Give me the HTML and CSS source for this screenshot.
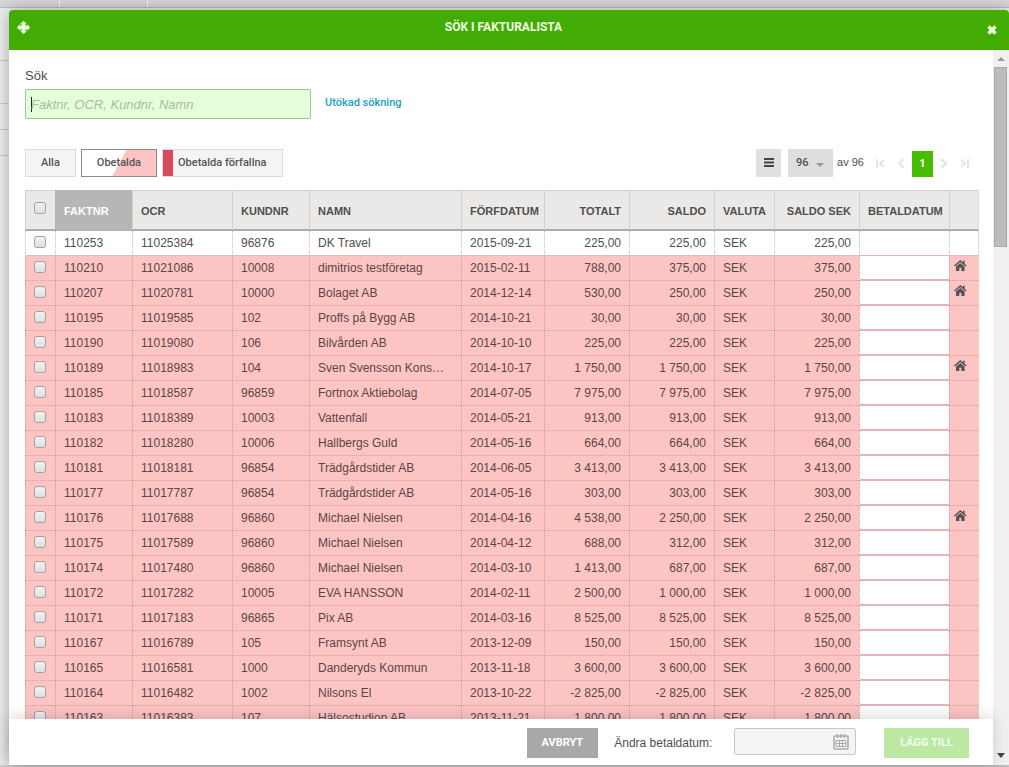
FILE: index.html
```html
<!DOCTYPE html>
<html lang="sv">
<head>
<meta charset="utf-8">
<meta name="viewport" content="width=device-width, initial-scale=1">
<title>Sök i fakturalista</title>
<link rel="stylesheet" href="styles.css">
</head>
<body>
<svg class="defs" aria-hidden="true">
  <symbol id="house" viewBox="0 0 13 11"><path d="M6.3 0 0 5.400l.9 1L6.300 2l5.400 4.400.9-1L10.600 3.700V.8H9v1.500z"/><path d="M6.300 2.900 2 6.400V11h3.300V7.700h2V11h3.300V6.400z"/></symbol>
</svg>
<div class="backdrop" aria-hidden="true">
  <div class="tabstrip"><span></span><span></span></div>
  <div class="ledge ledge-a"></div><div class="ledge ledge-b"></div><div class="ledge ledge-c"></div><div class="ledge ledge-c"></div>
</div>
<section class="dialog" role="dialog" aria-labelledby="title">
  <header class="titlebar">
    <button class="bar-btn" aria-label="Flytta"><svg width="13" height="13" viewBox="0 0 13 13"><path d="M6.500 0 9.300 3H8v2h2V3.700L13 6.500 10 9.300V8H8v2h1.300L6.500 13 3.700 10H5V8H3v1.300L0 6.500 3 3.700V5h2V3H3.700z" stroke="currentColor" stroke-width=".5"/></svg></button>
    <h1 id="title">SÖK I FAKTURALISTA</h1>
    <button class="bar-btn close" aria-label="Stäng"><svg width="10" height="10" viewBox="0 0 10 10"><path d="M1.500 1.500l7 7M8.500 1.500l-7 7" stroke="currentColor" stroke-width="3.400"/></svg></button>
  </header>
  <div class="dialog-body">
    <main class="content">
      <label class="search-label" for="q">Sök</label>
      <div class="search-row">
        <input class="search" id="q" type="text" placeholder="Faktnr, OCR, Kundnr, Namn">
        <a class="more" href="#">Utökad sökning</a>
      </div>
      <div class="toolbar">
        <div class="filters">
          <button class="filter">Alla</button>
          <button class="filter active">Obetalda</button>
          <button class="filter overdue">Obetalda förfallna</button>
        </div>
        <div class="pager">
          <button class="menu" aria-label="Meny"><svg width="10" height="9" viewBox="0 0 10 9"><path d="M0 0h10v2H0zM0 3.500h10v2H0zM0 7h10v2H0z"/></svg></button>
          <div class="per-page"><select aria-label="Rader per sida"><option>96</option></select><svg width="8" height="4" viewBox="0 0 8 4"><path d="M0 0h8L4 4z"/></svg></div>
          <span class="total">av 96</span>
          <nav class="pages" aria-label="Sidor">
            <button aria-label="Första"><svg width="9" height="9" viewBox="0 0 9 9"><path d="M1 0v9M8 1 4 4.500 8 8"/></svg></button>
            <button aria-label="Föregående"><svg width="9" height="9" viewBox="0 0 9 9"><path d="M7 0 2 4.500 7 9"/></svg></button>
            <button class="current">1</button>
            <button aria-label="Nästa"><svg width="9" height="9" viewBox="0 0 9 9"><path d="M2 0l5 4.500L2 9"/></svg></button>
            <button aria-label="Sista"><svg width="9" height="9" viewBox="0 0 9 9"><path d="M8 0v9M1 1l4 3.500L1 8"/></svg></button>
          </nav>
        </div>
      </div>
      <table class="invoices">
        <colgroup><col class="w30"><col class="w77"><col class="w100"><col class="w77"><col><col class="w83"><col class="w85"><col class="w85"><col class="w60"><col class="w85"><col class="w90"><col class="w30"></colgroup>
        <thead><tr><th><input type="checkbox" aria-label="Markera alla"></th><th class="sorted">FAKTNR</th><th>OCR</th><th>KUNDNR</th><th>NAMN</th><th>FÖRFDATUM</th><th>TOTALT</th><th>SALDO</th><th>VALUTA</th><th>SALDO SEK</th><th>BETALDATUM</th><th></th></tr></thead>
        <tbody>
          <tr class="plain"><td><input type="checkbox" aria-label="110253"><td>110253<td>11025384<td>96876<td>DK Travel<td>2015-09-21<td>225,00<td>225,00<td>SEK<td>225,00<td><td></tr>
          <tr><td><input type="checkbox" aria-label="110210"><td>110210<td>11021086<td>10008<td>dimitrios testföretag<td>2015-02-11<td>788,00<td>375,00<td>SEK<td>375,00<td><td><svg class="house"><use href="#house"/></svg></tr>
          <tr><td><input type="checkbox" aria-label="110207"><td>110207<td>11020781<td>10000<td>Bolaget AB<td>2014-12-14<td>530,00<td>250,00<td>SEK<td>250,00<td><td><svg class="house"><use href="#house"/></svg></tr>
          <tr><td><input type="checkbox" aria-label="110195"><td>110195<td>11019585<td>102<td>Proffs på Bygg AB<td>2014-10-21<td>30,00<td>30,00<td>SEK<td>30,00<td><td></tr>
          <tr><td><input type="checkbox" aria-label="110190"><td>110190<td>11019080<td>106<td>Bilvården AB<td>2014-10-10<td>225,00<td>225,00<td>SEK<td>225,00<td><td></tr>
          <tr><td><input type="checkbox" aria-label="110189"><td>110189<td>11018983<td>104<td>Sven Svensson Kons…<td>2014-10-17<td>1 750,00<td>1 750,00<td>SEK<td>1 750,00<td><td><svg class="house"><use href="#house"/></svg></tr>
          <tr><td><input type="checkbox" aria-label="110185"><td>110185<td>11018587<td>96859<td>Fortnox Aktiebolag<td>2014-07-05<td>7 975,00<td>7 975,00<td>SEK<td>7 975,00<td><td></tr>
          <tr><td><input type="checkbox" aria-label="110183"><td>110183<td>11018389<td>10003<td>Vattenfall<td>2014-05-21<td>913,00<td>913,00<td>SEK<td>913,00<td><td></tr>
          <tr><td><input type="checkbox" aria-label="110182"><td>110182<td>11018280<td>10006<td>Hallbergs Guld<td>2014-05-16<td>664,00<td>664,00<td>SEK<td>664,00<td><td></tr>
          <tr><td><input type="checkbox" aria-label="110181"><td>110181<td>11018181<td>96854<td>Trädgårdstider AB<td>2014-06-05<td>3 413,00<td>3 413,00<td>SEK<td>3 413,00<td><td></tr>
          <tr><td><input type="checkbox" aria-label="110177"><td>110177<td>11017787<td>96854<td>Trädgårdstider AB<td>2014-05-16<td>303,00<td>303,00<td>SEK<td>303,00<td><td></tr>
          <tr><td><input type="checkbox" aria-label="110176"><td>110176<td>11017688<td>96860<td>Michael Nielsen<td>2014-04-16<td>4 538,00<td>2 250,00<td>SEK<td>2 250,00<td><td><svg class="house"><use href="#house"/></svg></tr>
          <tr><td><input type="checkbox" aria-label="110175"><td>110175<td>11017589<td>96860<td>Michael Nielsen<td>2014-04-12<td>688,00<td>312,00<td>SEK<td>312,00<td><td></tr>
          <tr><td><input type="checkbox" aria-label="110174"><td>110174<td>11017480<td>96860<td>Michael Nielsen<td>2014-03-10<td>1 413,00<td>687,00<td>SEK<td>687,00<td><td></tr>
          <tr><td><input type="checkbox" aria-label="110172"><td>110172<td>11017282<td>10005<td>EVA HANSSON<td>2014-02-11<td>2 500,00<td>1 000,00<td>SEK<td>1 000,00<td><td></tr>
          <tr><td><input type="checkbox" aria-label="110171"><td>110171<td>11017183<td>96865<td>Pix AB<td>2014-03-16<td>8 525,00<td>8 525,00<td>SEK<td>8 525,00<td><td></tr>
          <tr><td><input type="checkbox" aria-label="110167"><td>110167<td>11016789<td>105<td>Framsynt AB<td>2013-12-09<td>150,00<td>150,00<td>SEK<td>150,00<td><td></tr>
          <tr><td><input type="checkbox" aria-label="110165"><td>110165<td>11016581<td>1000<td>Danderyds Kommun<td>2013-11-18<td>3 600,00<td>3 600,00<td>SEK<td>3 600,00<td><td></tr>
          <tr><td><input type="checkbox" aria-label="110164"><td>110164<td>11016482<td>1002<td>Nilsons El<td>2013-10-22<td>-2 825,00<td>-2 825,00<td>SEK<td>-2 825,00<td><td></tr>
          <tr><td><input type="checkbox" aria-label="110163"><td>110163<td>11016383<td>107<td>Hälsostudion AB<td>2013-11-21<td>1 800,00<td>1 800,00<td>SEK<td>1 800,00<td><td></tr>
        </tbody>
      </table>
    </main>
    <div class="scrollbar" aria-hidden="true">
      <svg width="8" height="4" viewBox="0 0 8 4"><path d="M0 4h8L4 0z" fill="#9a9a9a"/></svg>
      <div class="thumb"></div>
      <svg width="8" height="5" viewBox="0 0 8 5"><path d="M0 0h8L4 5z" fill="#444"/></svg>
    </div>
    <footer class="actions">
      <button class="btn cancel">AVBRYT</button>
      <label for="paydate">Ändra betaldatum:</label>
      <div class="date"><input id="paydate" type="text"><svg width="16" height="16" viewBox="0 0 16 16" fill="none" stroke="#aaa"><rect x="1" y="2" width="14" height="13" rx="1" stroke-width="1.500"/><path d="M4.500 0v4M8 0v4M11.500 0v4" stroke-width="1.500"/><path d="M3 6.500h10v6H3zM3 9.500h10M6.500 6.500v6M9.500 6.500v6"/></svg></div>
      <button class="btn add">LÄGG TILL</button>
    </footer>
  </div>
</section>
</body>
</html>
```
FILE: styles.css
```css
* { box-sizing: border-box; }
html, body { height: 100%; }
body {
  margin: 0;
  padding: 10px 0 2px 9px;
  overflow: hidden;
  background: #e9e9e9;
  color: #4f4f4f;
  font: 12px/16px "Liberation Sans", Arial, sans-serif;
}
button, input, select { font: inherit; color: inherit; margin: 0; }
button { border: 0; padding: 0; background: none; }
.defs { position: absolute; width: 0; height: 0; }

.backdrop { position: absolute; inset: 0; background: #ededed; border-bottom: 2px solid #d2d2d2; }
.tabstrip { display: flex; height: 8px; background: #d6d6d6; border-bottom: 1px solid #bbb; }
.tabstrip span { width: 60px; border-right: 1px solid #f4f4f4; }
.tabstrip span + span { width: 88px; }
.ledge { border-bottom: 1px solid #ccc; }
.ledge-a { height: 53px; }
.ledge-b { height: 43px; }
.ledge-c { height: 26px; }

.dialog {
  position: relative;
  display: flex;
  flex-direction: column;
  height: 100%;
  border-radius: 4px 4px 0 0;
  background: #fff;
  box-shadow: 0 0 16px rgba(0, 0, 0, .3);
}
.titlebar {
  display: flex;
  align-items: flex-start;
  height: 40px;
  padding: 9px 12px 0 8px;
  border-radius: 4px 4px 0 0;
  background: #42ac04;
  color: #f0ffe4;
}
.titlebar h1 { flex: 1; margin: 0; padding-right: 10px; font: bold 12px/16px Roboto, sans-serif; text-align: center; }
.bar-btn { display: flex; padding-top: 2px; color: #ecffdf; fill: currentColor; }
.bar-btn.close { padding-top: 6px; }

.dialog-body {
  flex: 1;
  min-height: 0;
  display: grid;
  grid-template-columns: 1fr 16px;
  grid-template-rows: 1fr 46px;
}
.content { min-height: 0; overflow: hidden; padding: 18px 14px 0 16px; }
.search-label { display: block; margin-bottom: 5px; font-size: 13px; }
.search-row { display: flex; gap: 14px; }
.search {
  width: 286px;
  height: 30px;
  padding: 0 5px;
  border: 1px solid #9dc98c;
  border-radius: 2px;
  outline: 0;
  background: linear-gradient(#222, #222) 5px center / 1px 15px no-repeat, #e4ffd9;
  font-size: 13px;
}
.search::placeholder { color: #a9bba1; font-style: italic; opacity: 1; }
.more { padding-top: 6px; color: #1c9dc4; font: 500 11px/16px Roboto, sans-serif; text-decoration: none; }

.toolbar { display: flex; justify-content: space-between; margin: 30px 0 13px; }
.filters { display: flex; gap: 5px; font: 500 11px/16px Roboto, sans-serif; }
.filter { height: 28px; padding: 0 15px; border: 1px solid #dcdcdc; background: #f4f4f4; color: #555; }
.filter.active { border-color: #8a8a8a; background: linear-gradient(118deg, #fff 50%, #fdc4c4 51%); }
.filter.overdue { padding-left: 15px; background: linear-gradient(#d94b5c, #d94b5c) left / 10px 100% no-repeat, #f4f4f4; }
.pager { display: flex; padding-right: 4px; }
.menu { width: 25px; height: 28px; margin-right: 7px; background: #e0e0e0; fill: #444; }
.per-page { position: relative; }
.per-page select { appearance: none; width: 45px; height: 28px; padding: 0 8px; border: 0; border-radius: 0; background: #dedede; font: 500 11px/16px Roboto, sans-serif; }
.per-page svg { position: absolute; right: 9px; top: 14px; fill: #999; pointer-events: none; }
.total { padding: 5px 6px 0 4px; font-size: 11px; }
.pages { display: flex; align-items: center; height: 28px; }
.pages button { display: flex; justify-content: center; align-items: center; width: 21px; height: 26px; }
.pages svg { fill: none; stroke: #e4e4e4; stroke-width: 2; }
.pages .current { margin-top: 2px; background: #47bd06; color: #fff; font: bold 11px/16px Roboto, sans-serif; }

.invoices { width: 100%; table-layout: fixed; border-collapse: separate; border-spacing: 0; }
.w30 { width: 30px; }
.w60 { width: 60px; }
.w77 { width: 77px; }
.w83 { width: 83px; }
.w85 { width: 85px; }
.w90 { width: 90px; }
.w100 { width: 100px; }
.invoices th {
  height: 41px;
  padding: 1px 0 0 8px;
  border: solid #d2d2d2;
  border-width: 1px 0 2px 1px;
  border-bottom-color: #adadad;
  background: #eae9e7;
  font-size: 11px;
  text-align: left;
  white-space: nowrap;
}
.invoices .sorted { border-color: #b4b4b4; background: #b6b6b6; color: #fff; }
.invoices td {
  height: 25px;
  padding: 0 0 0 8px;
  border: dotted #d99a9a;
  border-width: 0 0 1px 1px;
  background: #fdc4c4;
  color: #5d4545;
  white-space: nowrap;
}
.invoices .plain td { border-color: #bbb; border-bottom: 1px solid #dcbcbc; background: #fff; color: #4f4f4f; }
.invoices :is(th, td):is(:nth-child(7), :nth-child(8), :nth-child(10)) { padding-left: 0; padding-right: 8px; text-align: right; }
.invoices td:nth-child(11) { border-bottom: 2px solid #e8b3b7; background: #fff; }
.invoices .plain td:nth-child(11) { border-bottom: 1px solid #e8b3b7; }
.invoices td:last-child { padding-left: 4px; }
.invoices .plain td:last-child, .invoices th:last-child { border-right: 1px solid #ddd; }
.invoices :is(th, td):first-child { padding: 0 0 2px 8px; }
.invoices th:first-child { padding-bottom: 5px; }
.invoices input {
  appearance: none;
  display: block;
  width: 12px;
  height: 12px;
  border: 1px solid #a9a0a0;
  border-radius: 3px;
  background: linear-gradient(#f2f2f2, #dce0e0);
}
.house { display: block; width: 13px; height: 11px; margin-bottom: 5px; fill: #555; }

.scrollbar {
  grid-column: 2;
  grid-row: 1 / 3;
  display: flex;
  flex-direction: column;
  align-items: center;
  padding: 7px 1px 7px 0;
  background: #f0f0f0;
}
.thumb { width: 13px; height: 180px; margin: 6px 0 auto; border: 1px solid #a8a8a8; background: #bcbcbc; }

.actions {
  position: relative;
  grid-column: 1;
  grid-row: 2;
  display: flex;
  justify-content: flex-end;
  align-items: flex-start;
  padding: 9px 24px 0;
  background: #fff;
  box-shadow: 0 -2px 16px rgba(0, 0, 0, .16);
}
.actions label { margin: 7px 22px 0 16px; }
.btn { height: 30px; padding: 0 15px; color: #fff; font: bold 11px/16px Roboto, sans-serif; }
.cancel { background: #a8a8a8; }
.add { margin-left: 28px; padding: 0 16px; background: #bce8a3; color: #f0ffe8; }
.date { position: relative; }
.date input { display: block; width: 122px; height: 27px; padding: 0 28px 0 6px; border: 1px solid #c8c8c8; border-radius: 2px; background: #f4f4f4; }
.date svg { position: absolute; right: 7px; top: 6px; }
```
